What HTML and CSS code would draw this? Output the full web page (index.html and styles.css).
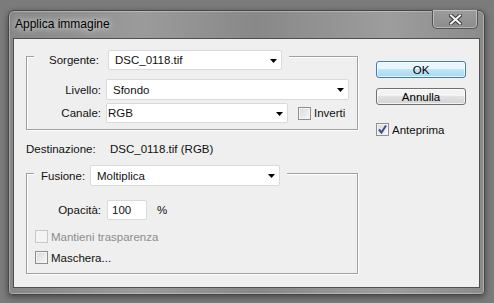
FILE: index.html
```html
<!DOCTYPE html>
<html lang="it">
<head>
    <meta charset="UTF-8">
    <title>Applica immagine</title>
    <link rel="stylesheet" href="styles.css">
</head>
<body>
    <div class="window">
        <div class="titlebar">
            <span class="title">Applica immagine</span>
            <div class="close">
                <svg width="13" height="11" viewBox="0 0 13 11">
                    <path d="M2 1.5 L11 9.5 M11 1.5 L2 9.5" stroke="#3a3a3a" stroke-width="4" stroke-linecap="square"/>
                    <path d="M2 1.5 L11 9.5 M11 1.5 L2 9.5" stroke="#f4f4f4" stroke-width="2" stroke-linecap="square"/>
                </svg>
            </div>
        </div>

        <div class="client">
            <div class="main">
                <!-- Sorgente -->
                <div class="group group-src">
                    <div class="group-head">
                        <div class="edge edge-l"></div>
                        <div class="head-content">
                            <span class="head-label">Sorgente:</span>
                            <div class="dropdown dd-src">
                                <span>DSC_0118.tif</span>
                                <svg class="arrow" width="7" height="4" viewBox="0 0 7 4"><polygon points="0,0 7,0 3.5,4" fill="#000"/></svg>
                            </div>
                        </div>
                        <div class="edge edge-r"></div>
                    </div>
                    <div class="group-body">
                        <div class="row row-layer">
                            <span class="label">Livello:</span>
                            <div class="dropdown dd-layer">
                                <span>Sfondo</span>
                                <svg class="arrow" width="7" height="4" viewBox="0 0 7 4"><polygon points="0,0 7,0 3.5,4" fill="#000"/></svg>
                            </div>
                        </div>
                        <div class="row row-channel">
                            <span class="label">Canale:</span>
                            <div class="dropdown dd-channel">
                                <span>RGB</span>
                                <svg class="arrow" width="7" height="4" viewBox="0 0 7 4"><polygon points="0,0 7,0 3.5,4" fill="#000"/></svg>
                            </div>
                            <label class="check check-invert"><span class="box"></span>Inverti</label>
                        </div>
                    </div>
                </div>

                <div class="dest">
                    <span class="dest-label">Destinazione:</span>
                    <span>DSC_0118.tif (RGB)</span>
                </div>

                <!-- Fusione -->
                <div class="group group-blend">
                    <div class="group-head">
                        <div class="edge edge-l"></div>
                        <div class="head-content">
                            <span class="head-label">Fusione:</span>
                            <div class="dropdown dd-blend">
                                <span>Moltiplica</span>
                                <svg class="arrow" width="7" height="4" viewBox="0 0 7 4"><polygon points="0,0 7,0 3.5,4" fill="#000"/></svg>
                            </div>
                        </div>
                        <div class="edge edge-r"></div>
                    </div>
                    <div class="group-body">
                        <div class="row row-opacity">
                            <span class="label">Opacità:</span>
                            <div class="field">100</div>
                            <span class="unit">%</span>
                        </div>
                        <label class="check check-row disabled"><span class="box"></span>Mantieni trasparenza</label>
                        <label class="check check-row check-mask"><span class="box"></span>Maschera...</label>
                    </div>
                </div>
            </div>

            <div class="side">
                <button class="btn btn-ok">OK</button>
                <button class="btn btn-cancel">Annulla</button>
                <label class="check check-preview">
                    <span class="box checked">
                        <svg width="11" height="11" viewBox="0 0 11 11"><path d="M2 5.5 L4.5 8.5 L9 1.5" fill="none" stroke="#3b4f8c" stroke-width="2"/></svg>
                    </span>Anteprima
                </label>
            </div>
        </div>
    </div>
</body>
</html>
```

FILE: styles.css
```css
* {
    margin: 0;
    padding: 0;
    box-sizing: border-box;
}

body {
    width: 494px;
    height: 303px;
    overflow: hidden;
    background: #7b7b7b;
    font-family: "Liberation Sans", Arial, sans-serif;
    font-size: 11.5px;
    color: #111;
    padding: 10px 0 0 8px;
}

.window {
    width: 477px;
    height: 285px;
    display: flex;
    flex-direction: column;
    padding: 0 4px 6px 4px;
    border: 1px solid #474747;
    border-radius: 6px 6px 4px 4px;
    background: linear-gradient(90deg, #878787, #9b9b9b 28%, #888 52%, #9d9d9d 80%, #8b8b8b);
    box-shadow: inset 0 0 0 1px rgba(255, 255, 255, 0.3), 0 2px 6px rgba(0, 0, 0, 0.45);
}

.titlebar {
    height: 27px;
    display: flex;
    align-items: flex-start;
}

.title {
    margin: 6px 0 0 2px;
    font-size: 12px;
    line-height: 14px;
    color: #000;
    text-shadow: 0 0 6px rgba(255, 255, 255, 0.8), 0 0 10px rgba(255, 255, 255, 0.5);
}

.close {
    width: 46px;
    height: 19px;
    margin: -1px 2px 0 auto;
    display: flex;
    align-items: center;
    justify-content: center;
    border: 1px solid #555;
    border-top: none;
    border-radius: 0 0 5px 5px;
    background: linear-gradient(#9c9c9c, #8c8c8c);
    box-shadow: inset 0 0 0 1px rgba(255, 255, 255, 0.35);
}

.client {
    flex: 1;
    display: flex;
    background: #efefef;
    border: 1px solid #4f4f4f;
}

.main {
    width: 332px;
    margin: 11px 0 0 12px;
}

.side {
    width: 90px;
    margin: 22px 0 0 18px;
    display: flex;
    flex-direction: column;
    align-items: flex-start;
}

/* gruppi */
.group-head {
    display: flex;
}

.edge {
    align-self: stretch;
    border-top: 1px solid #a0a0a0;
}

.edge-l {
    width: 8px;
    border-left: 1px solid #a0a0a0;
    box-shadow: inset 1px 1px 0 #fff;
}

.edge-r {
    flex: 1;
    border-right: 1px solid #a0a0a0;
    box-shadow: inset 0 1px 0 #fff, 1px 0 0 #fff;
}

.group-src .edge {
    margin-top: 6px;
}

.group-blend .edge {
    margin-top: 8px;
}

.head-content {
    display: flex;
    align-items: center;
    padding: 0 7px 0 15px;
}

.group-blend .head-content {
    padding-left: 7px;
}

.group-src .head-label {
    width: 59px;
}

.group-blend .head-label {
    width: 49px;
}

.group-body {
    border: 1px solid #a0a0a0;
    border-top: none;
    box-shadow: inset 1px 0 0 #fff, 1px 1px 0 #fff;
}

.group-src .group-body {
    padding: 9px 0 6px;
}

.group-blend {
    margin-top: 7px;
}

.group-blend .group-body {
    padding: 14px 0 9px;
}

.row {
    display: flex;
    align-items: center;
}

.row-channel {
    margin-top: 3px;
}

.label {
    width: 74px;
    margin-right: 5px;
    text-align: right;
}

.row-opacity .label {
    margin-right: 6px;
}

/* controlli */
.dropdown {
    display: flex;
    align-items: center;
    height: 20px;
    padding-left: 6px;
    background: #fff;
    border: 1px solid #dadada;
    border-radius: 2px;
}

.arrow {
    margin: 1px 4px 0 auto;
}

.dd-src {
    width: 174px;
}

.dd-layer {
    width: 243px;
    height: 21px;
}

.dd-channel {
    width: 182px;
    padding-left: 1px;
}

.dd-blend {
    width: 190px;
    height: 21px;
}

.field {
    width: 40px;
    height: 20px;
    padding-left: 4px;
    display: flex;
    align-items: center;
    background: #fff;
    border: 1px solid #dadada;
    border-radius: 2px;
}

.unit {
    margin-left: 10px;
}

.dest {
    display: flex;
    align-items: center;
    height: 18px;
    margin-top: 10px;
}

.dest-label {
    width: 84px;
}

.check {
    display: flex;
    align-items: center;
    height: 13px;
    color: #111;
}

.box {
    width: 13px;
    height: 13px;
    margin-right: 3px;
    display: flex;
    align-items: center;
    justify-content: center;
    border: 1px solid #8e8f8f;
    background: linear-gradient(135deg, #d9d9d9, #f8f8f8);
    box-shadow: inset 0 0 0 1px #f4f4f4;
}

.check-invert {
    margin-left: 10px;
}

.check-row {
    margin-left: 8px;
    margin-top: 10px;
}

.check-mask {
    margin-top: 8px;
}

.disabled {
    color: #8d8d8d;
}

.disabled .box {
    border-color: #c8c8c8;
    background: #f4f4f4;
    box-shadow: none;
}

.btn {
    width: 90px;
    height: 17px;
    font: inherit;
    color: #000;
    line-height: 14px;
    border: 1px solid #707070;
    border-radius: 3px;
    background: linear-gradient(#f3f3f3 45%, #e2e2e2 50%, #d3d3d3);
    box-shadow: inset 0 0 0 1px rgba(255, 255, 255, 0.7);
}

.btn-ok {
    border-color: #3c7fb1;
    background: linear-gradient(#eaf6fd 45%, #c4e5f6 50%, #a7d8f2);
}

.btn-cancel {
    margin-top: 10px;
}

.check-preview {
    margin-top: 18px;
}
```
